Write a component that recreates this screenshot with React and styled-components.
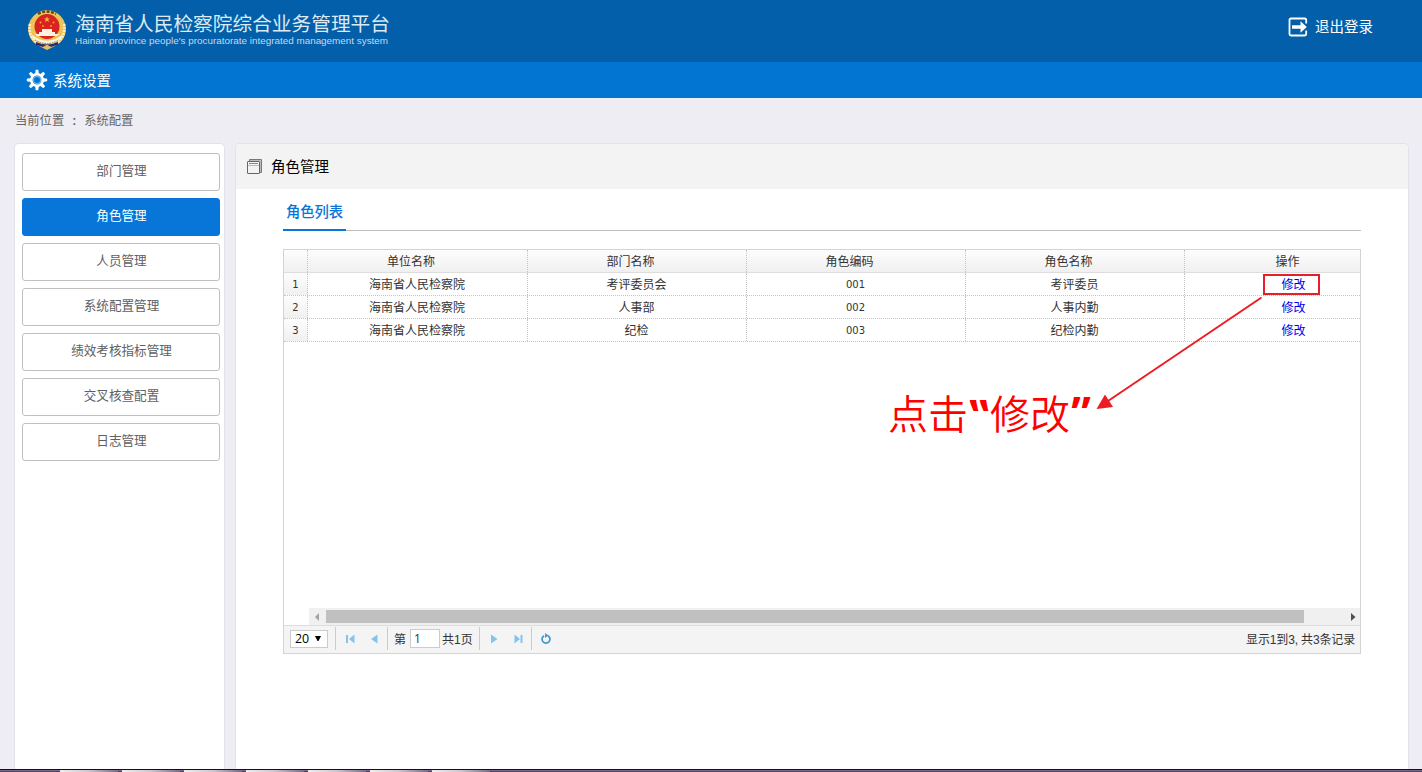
import React from 'react';
import styled, { createGlobalStyle } from 'styled-components';

const GlobalStyle = createGlobalStyle`
  * { box-sizing: border-box; }
  body {
    margin: 0;
    background: #eeedf4;
    font-family: "Liberation Sans", "Noto Sans CJK SC", sans-serif;
    font-size: 12px;
    color: #333;
    overflow: hidden;
  }
`;

const Page = styled.div`
  position: relative;
  display: flex;
  flex-direction: column;
  width: 1422px;
  height: 772px;
  overflow: hidden;
`;

const Header = styled.header`
  display: flex;
  justify-content: space-between;
  height: 62px;
  padding: 9px 49px 0 27px;
  background: #035fa9;
  color: #fff;
  flex: none;
`;

const Brand = styled.div`
  display: flex;
  gap: 8px;
`;

const BrandText = styled.div`
  display: flex;
  flex-direction: column;
  white-space: nowrap;
`;

const BrandName = styled.div`
  height: 27px;
  line-height: 28px;
  font-size: 19.7px;
  font-weight: 400;
  font-family: "Noto Sans CJK SC", sans-serif;
  color: #dceaf5;
`;

const BrandSub = styled.div`
  height: 12px;
  line-height: 10px;
  font-family: "Liberation Sans", sans-serif;
  font-size: 9px;
  color: #c3d9ec;
  transform: scaleX(1.097);
  transform-origin: left;
`;

const Logout = styled.a`
  display: flex;
  align-items: center;
  gap: 7px;
  height: 35px;
  font-size: 14.5px;
`;

const Label = styled.span`
  padding-bottom: 2px;
`;

const Nav = styled.nav`
  display: flex;
  align-items: center;
  gap: 5px;
  height: 36px;
  padding: 0 26px;
  background: #0275d3;
  color: #fff;
  font-size: 14.5px;
  flex: none;
`;

const Crumbs = styled.div`
  display: flex;
  height: 45px;
  padding-left: 15px;
  line-height: 46px;
  font-size: 12.3px;
  color: #666;
  flex: none;
`;

const CrumbColon = styled.span`
  width: 20px;
  text-align: center;
  font-weight: 700;
`;

const Columns = styled.div`
  display: flex;
  gap: 10px;
  flex: 1;
  min-height: 0;
  padding: 0 13px 0 14px;
`;

const Sidebar = styled.aside`
  display: flex;
  flex-direction: column;
  gap: 7px;
  width: 211px;
  padding: 9px 0 0 7px;
  background: #fff;
  border: 1px solid #e3e2ea;
  border-bottom: 0;
  border-radius: 5px 5px 0 0;
`;

const MenuItem = styled.div`
  width: 198px;
  height: 38px;
  padding-left: 1px;
  border: 1px solid ${p => (p.$active ? '#0876d8' : '#c0c0c0')};
  border-radius: 3px;
  background: ${p => (p.$active ? '#0876d8' : '#fff')};
  color: ${p => (p.$active ? '#fff' : '#606060')};
  font-size: 12.6px;
  line-height: 35px;
  text-align: center;
`;

const Panel = styled.main`
  flex: 1;
  background: #fff;
  border: 1px solid #e3e2ea;
  border-bottom: 0;
  border-radius: 5px 5px 0 0;
  overflow: hidden;
`;

const PanelHead = styled.div`
  display: flex;
  align-items: center;
  gap: 8px;
  height: 45px;
  padding-left: 11px;
  background: #f3f3f3;
  color: #000;
  font-size: 14.5px;
`;

const Tabs = styled.div`
  display: flex;
  height: 42px;
  margin: 0 47px;
  background: linear-gradient(#c0c0c0, #c0c0c0) 0 41px / 100% 1px no-repeat;
`;

const Tab = styled.div`
  width: 63px;
  border-bottom: 2px solid #0876d8;
  color: #0876d8;
  font-size: 14.3px;
  font-weight: 500;
  line-height: 46px;
  text-align: center;
`;

const Grid = styled.section`
  display: flex;
  flex-direction: column;
  width: 1078px;
  height: 405px;
  margin: 18px 0 0 47px;
  border: 1px solid #d3d3d3;
`;

const GridBody = styled.div`
  flex: 1;
  overflow: hidden;
`;

const Row = styled.div`
  display: grid;
  grid-template-columns: 24px 220px 219px 219px 219px 219px;
  height: 23px;
  line-height: 24px;
  border-bottom: 1px ${p => (p.$head ? 'solid #ddd' : 'dotted #c4c4c4')};
  background: ${p => (p.$head ? 'linear-gradient(#fdfdfd, #f0f0f0)' : '#fff')};
`;

const Cell = styled.div`
  height: 22px;
  border-right: 1px dotted #c4c4c4;
  text-align: center;
  padding-right: ${p => (p.$head ? '13px' : '1px')};
  font-family: ${p => (p.$code ? '"DejaVu Sans", sans-serif' : 'inherit')};
  font-size: ${p => (p.$code ? '10px' : '12px')};
  line-height: ${p => (p.$code ? '23px' : '24px')};
`;

const RowNumber = styled(Cell)`
  padding-right: 0;
  background: linear-gradient(#fdfdfd, #f0f0f0);
  font-family: "DejaVu Sans", sans-serif;
  font-size: 10px;
  line-height: 23px;
`;

const EditLink = styled.a`
  color: #0000ee;
`;

const ScrollTrack = styled.div`
  display: flex;
  align-items: center;
  justify-content: space-between;
  height: 17px;
  margin-left: 25px;
  padding: 0 4px 0 5px;
  background: #f0f0f0;
`;

const ScrollThumb = styled.div`
  width: 978px;
  height: 13px;
  margin: 0 auto 0 7px;
  background: #c0c0c0;
`;

const Pager = styled.footer`
  display: flex;
  align-items: center;
  height: 28px;
  padding: 0 5px 2px 6px;
  border-top: 1px solid #ddd;
  background: #f4f4f4;
`;

const PageSize = styled.div`
  display: flex;
  align-items: center;
  justify-content: space-between;
  width: 38px;
  height: 18px;
  padding: 0 6px 0 4px;
  border: 1px solid #ccc;
  background: #fff;
  color: #000;
  font-family: "Open Sans", sans-serif;
  font-size: 12.4px;
`;

const Divider = styled.div`
  width: 1px;
  height: 23px;
  margin-left: ${p => p.$before || 0}px;
  margin-right: ${p => p.$after || 0}px;
  background: #ccc;
`;

const PageInput = styled.div`
  width: 30px;
  height: 19px;
  margin: 0 2px 0 4px;
  padding-left: 3px;
  border: 1px solid #ccc;
  background: #fff;
  font-family: "Open Sans", sans-serif;
  line-height: 17px;
`;

const PagerIcons = styled.div`
  display: flex;
  gap: ${p => p.$gap || 0}px;
`;

const Summary = styled.div`
  margin-left: auto;
  letter-spacing: -0.15px;
`;

const Taskbar = styled.div`
  position: absolute;
  left: 0;
  bottom: 0;
  display: flex;
  gap: 4px;
  width: 100%;
  height: 3px;
  padding-left: 60px;
  border-top: 1px solid #15101f;
  background: linear-gradient(#89799f, #43305c);
`;

const Task = styled.div`
  width: 58px;
  height: 2px;
  background: linear-gradient(90deg, #efedf1, #cbc5d2 50%, #79698d);
`;

const Highlight = styled.div`
  position: absolute;
  left: 1263px;
  top: 274px;
  width: 57px;
  height: 21px;
  border: 2px solid #e5202a;
`;

const Arrow = styled.svg`
  position: absolute;
  left: 1090px;
  top: 290px;
`;

const Callout = styled.div`
  position: absolute;
  left: 888px;
  top: 383px;
  display: flex;
  font-family: "Noto Sans CJK SC", sans-serif;
  font-size: 40px;
  font-weight: 350;
  line-height: 58px;
  color: #f00;
  white-space: nowrap;
`;

const Quote = styled.span`
  display: block;
  width: 22px;
  height: 58px;
  font-family: "Open Sans", sans-serif;
  font-size: 44px;
  font-weight: 700;
  text-align: center;
  transform: ${p => (p.$open ? 'translateY(-16px) scaleY(-1)' : 'none')};
`;

const Emblem = () => (
  <svg width="40" height="42" viewBox="0 0 40 42">
    <path d="M10 4 Q20-2 30 4 Q39 10 39 21 Q38 31 30 36 L20 41 L10 36 Q2 31 1 21 Q1 10 10 4Z" fill="#edc45a" />
    <path d="M3 15 Q1 27 10 34 M37 15 Q39 27 30 34" fill="none" stroke="#faf0cf" strokeWidth="2.5" strokeDasharray="2 1" />
    <path d="M11 5 Q20 0 29 5" fill="none" stroke="#5b4c1c" strokeWidth="2.4" strokeDasharray="3 1.5" />
    <circle cx="20" cy="17.5" r="12.500" fill="#d8231f" />
    <path d="M20 7.5l.9 2h2.1l-1.7 1.3.7 2.1-2-1.2-2 1.2.7-2.1L17 9.500h2.1z" fill="#f2b63f" />
    <g fill="#f0a93c"><circle cx="13.500" cy="13.500" r="1" /><circle cx="26.500" cy="13.500" r="1" /><circle cx="16" cy="17" r=".9" /><circle cx="24" cy="17" r=".9" /></g>
    <path d="M15 20h10v3h3v2h4l-2 2H10l-2-2h4v-2h3z" fill="#fff1df" />
    <path d="M5 26 Q20 37 35 26 L34 30 Q20 39 6 30Z" fill="#faf2d9" />
    <path d="M8 31 Q20 38 32 31" fill="none" stroke="#8d7d56" strokeWidth="1" strokeDasharray="1.500 1" />
    <path d="M9 33 Q20 38 31 33 L31 36 Q26 37 24 38 L20 36 L16 38 L9 36Z" fill="#292a78" />
    <path d="M16 38l4-2 4 2-4 2z" fill="#e4bd69" />
  </svg>
);

const LogoutIcon = () => (
  <svg width="20" height="20" viewBox="0 0 20 20">
    <path d="M18.200 6.500V3Q18.200 1.500 16.700 1.500H3Q1.500 1.500 1.500 3V17Q1.500 18.500 3 18.500H16.700Q18.200 18.500 18.200 17V13.500" fill="none" stroke="#fff" strokeWidth="1.800" />
    <path d="M4 8.200h8.500V4.200L18.800 10l-6.300 5.800v-4H4z" fill="#fff" />
  </svg>
);

const GearIcon = () => (
  <svg width="22" height="22" viewBox="-11 -11 22 22">
    {[0, 45, 90, 135, 180, 225, 270, 315].map(a => (
      <path key={a} d="M-1.900-6L-1.300-10.200H1.300L1.900-6z" fill="#fff" transform={`rotate(${a})`} />
    ))}
    <circle r="5.700" fill="none" stroke="#fff" strokeWidth="2.500" />
    <circle r="3.600" fill="none" stroke="#fff" strokeWidth="1.200" opacity=".45" />
  </svg>
);

const WindowsIcon = () => (
  <svg width="16" height="16" viewBox="0 0 16 16" fill="none">
    <path d="M2.500 3V.5H14.500V13.500H13" stroke="#777" />
    <path d="M3 1.500H13.500V13" stroke="#bbb" />
    <rect x=".5" y="2.500" width="12" height="12" rx=".5" fill="#f3f3f3" stroke="#666" />
    <path d="M2 4.500H11" stroke="#888" />
    <path d="M1 6.500H12" stroke="#bbb" />
  </svg>
);

const Glyph = ({ d, color = '#83c4ed', bar, width = 10 }) => (
  <svg width={width} height="10" viewBox={`0 0 ${width} 10`}>
    <path d={d} fill={color} />
    {bar !== undefined && <rect x={bar} y="1" width="2" height="8" fill={color} />}
  </svg>
);

const RefreshIcon = () => (
  <svg width="12" height="12" viewBox="0 0 12 12">
    <path d="M4 2.700A4 4 0 1 0 8 2.700" fill="none" stroke="#4699d0" strokeWidth="1.800" />
    <path d="M5 0L8.500 2.500L5 5z" fill="#4699d0" />
  </svg>
);

const menu = ['部门管理', '角色管理', '人员管理', '系统配置管理', '绩效考核指标管理', '交叉核查配置', '日志管理'];
const heads = ['单位名称', '部门名称', '角色编码', '角色名称', '操作'];
const roles = [
  { unit: '海南省人民检察院', dept: '考评委员会', code: '001', name: '考评委员' },
  { unit: '海南省人民检察院', dept: '人事部', code: '002', name: '人事内勤' },
  { unit: '海南省人民检察院', dept: '纪检', code: '003', name: '纪检内勤' },
];

export default function App() {
  return (
    <Page>
      <GlobalStyle />
      <Header>
        <Brand>
          <Emblem />
          <BrandText>
            <BrandName>海南省人民检察院综合业务管理平台</BrandName>
            <BrandSub>Hainan province people's procuratorate integrated management system</BrandSub>
          </BrandText>
        </Brand>
        <Logout><LogoutIcon /><Label>退出登录</Label></Logout>
      </Header>
      <Nav><GearIcon /><Label>系统设置</Label></Nav>
      <Crumbs>当前位置<CrumbColon>:</CrumbColon>系统配置</Crumbs>
      <Columns>
        <Sidebar>
          {menu.map((m, i) => <MenuItem key={m} $active={i === 1}>{m}</MenuItem>)}
        </Sidebar>
        <Panel>
          <PanelHead><WindowsIcon /><Label>角色管理</Label></PanelHead>
          <Tabs><Tab>角色列表</Tab></Tabs>
          <Grid>
            <GridBody>
              <Row $head>
                <Cell />
                {heads.map(h => <Cell key={h} $head>{h}</Cell>)}
              </Row>
              {roles.map((r, i) => (
                <Row key={r.code}>
                  <RowNumber>{i + 1}</RowNumber>
                  <Cell>{r.unit}</Cell>
                  <Cell>{r.dept}</Cell>
                  <Cell $code>{r.code}</Cell>
                  <Cell>{r.name}</Cell>
                  <Cell><EditLink>修改</EditLink></Cell>
                </Row>
              ))}
            </GridBody>
            <ScrollTrack>
              <Glyph width={5} d="M5 1V9L1 5z" color="#a3a3a3" />
              <ScrollThumb />
              <Glyph width={5} d="M0 1V9L4.500 5z" color="#505050" />
            </ScrollTrack>
            <Pager>
              <PageSize>20
                <svg width="6" height="5" viewBox="0 0 6 5"><path d="M0 0H6L3.500 5H2.500z" fill="#000" /></svg>
              </PageSize>
              <Divider $before={7} $after={9} />
              <PagerIcons $gap={14}>
                <Glyph d="M9.500 0.500V9.500L4 5z" bar={1} />
                <Glyph d="M8.500 0.500V9.500L2 5z" />
              </PagerIcons>
              <Divider $before={8} $after={6} />
              第<PageInput>1</PageInput>共1页
              <Divider $before={6} $after={9} />
              <PagerIcons $gap={15}>
                <Glyph d="M2 0.500V9.500L8.500 5z" />
                <Glyph d="M0.500 0.500V9.500L6 5z" bar={6.5} />
              </PagerIcons>
              <Divider $before={7} $after={8} />
              <RefreshIcon />
              <Summary>显示1到3, 共3条记录</Summary>
            </Pager>
          </Grid>
        </Panel>
      </Columns>
      <Highlight />
      <Arrow width="180" height="125" viewBox="0 0 180 125">
        <path d="M171.500 7.500L18 111" stroke="#ed1c24" strokeWidth="2" />
        <path d="M6.500 119L15 104.500L23 117z" fill="#ed1c24" />
      </Arrow>
      <Callout>点击<Quote $open>“</Quote>修改<Quote>”</Quote></Callout>
      <Taskbar>
        {menu.map(m => <Task key={m} />)}
      </Taskbar>
    </Page>
  );
}
